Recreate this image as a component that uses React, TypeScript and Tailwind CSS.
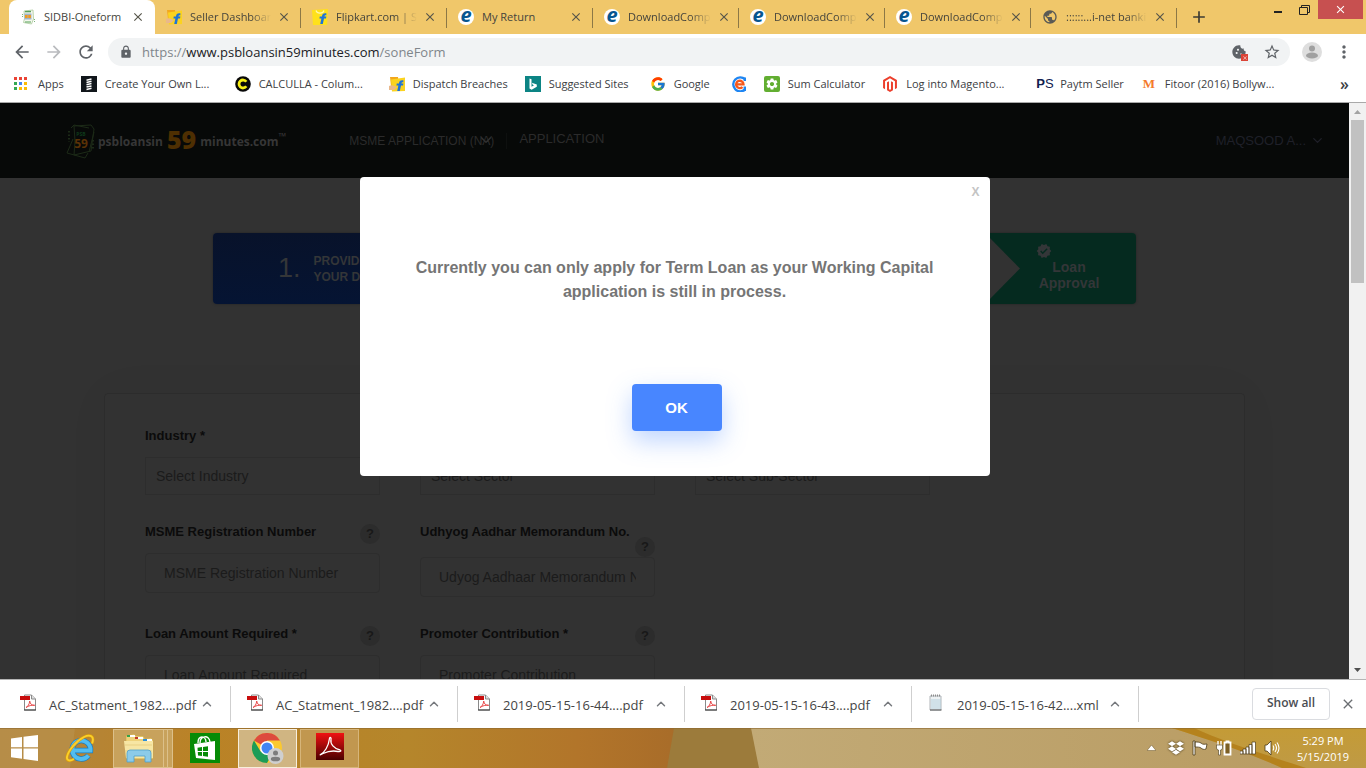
import React from "react";
import {
  MdAdd, MdArrowBack, MdArrowForward, MdClose, MdCookie, MdLock, MdMoreVert,
  MdPublic, MdRefresh, MdSettings, MdStarBorder, MdVerified,
} from "react-icons/md";
import { FcGoogle } from "react-icons/fc";
import { FaDropbox, FaMagento } from "react-icons/fa";
import { ChevronDown, ChevronUp } from "lucide-react";

const uiFont = "font-['Open_Sans','Noto_Sans',sans-serif]";
const pageFont = "font-['Liberation_Sans',Arial,sans-serif]";

/* ---------- small site icons ---------- */

function SidbiIcon() {
  return (
    <svg viewBox="0 0 16 16" className="size-4 shrink-0" aria-hidden="true">
      <path d="M4 2l9-1 .5 9-2 5-8-1.500 1-4z" fill="#f4f7ee" stroke="#a9c99b" strokeWidth="0.800" />
      <path d="M5 2.600h6" stroke="#58a05a" strokeWidth="1.400" />
      <rect x="4.500" y="4.500" width="7" height="6" fill="#9fb4c9" />
      <path d="M5 7.500h6" stroke="#f29a1f" strokeWidth="3" strokeDasharray="2.600 0.700" />
      <path d="M5 13h6" stroke="#6fb070" strokeWidth="1.200" />
      <path d="M2.500 5v4M14.500 10v3" stroke="#7cb37a" strokeDasharray="1 1" />
    </svg>
  );
}

function FlipkartIcon({ bag = false }: { bag?: boolean }) {
  return (
    <svg viewBox="0 0 16 16" className="size-4 shrink-0" aria-hidden="true">
      {bag ? (
        <>
          <path d="M0 1l16-1-1 16H1z" fill="#ffe11b" />
          <path d="M4 1.500c1 3.500 7 3.500 8 0" fill="none" stroke="#fff8b0" strokeWidth="1.200" />
        </>
      ) : (
        <>
          <path d="M1 1h8l1 9H2z" fill="#f3a71c" />
          <path d="M2 3.500l14-2v13.500l-13 .5z" fill="#fbd31f" />
          <path d="M0 10c3-2 5 0 8 1l-3 3H0z" fill="#e9b88b" />
        </>
      )}
      <path d="M14.500 4.500c-3-.6-4.200.8-4.600 3H7.800l-.4 1.900h2L8.200 15h2.600l1.200-5.600h2l.4-1.900h-2c.2-1 .8-1.300 1.800-1.100z" fill="#1f74d8" />
    </svg>
  );
}

function EIcon() {
  return (
    <span className="flex size-4 shrink-0 items-center justify-center rounded-full bg-white">
      <span className="-mt-1 font-['Open_Sans',sans-serif] text-[20px] leading-none font-bold text-[#075690] italic">e</span>
    </span>
  );
}

function SpringIcon() {
  return (
    <svg viewBox="0 0 16 16" className="size-4 shrink-0" aria-hidden="true">
      <rect width="16" height="16" fill="#11161b" />
      <path d="M5.500 4.200l5-1.200M5.500 6.500l5-1.200M5.500 8.800l5-1.200M5.500 11.100l5-1.200M5.500 13.400l5-1.200" stroke="#fff" strokeWidth="1.500" />
    </svg>
  );
}

function CalcullaIcon() {
  return (
    <svg viewBox="0 0 16 16" className="size-4 shrink-0" aria-hidden="true">
      <circle cx="8" cy="8" r="7.800" fill="#080808" />
      <path d="M11.300 5.700a4 4 0 1 0 0 4.600" fill="none" stroke="#f6ee15" strokeWidth="2.800" />
    </svg>
  );
}

function BingIcon() {
  return (
    <svg viewBox="0 0 16 16" className="size-4 shrink-0" aria-hidden="true">
      <rect width="16" height="16" fill="#0c8484" />
      <path d="M4.500 2.500l2 .7v7.600l2.500-1.500-1.300-.6-.8-2 4.900 1.700v2.300l-5.200 3.100-2.100-1.200z" fill="#fff" />
    </svg>
  );
}

function RingEIcon() {
  return (
    <svg viewBox="0 0 16 16" className="size-4 shrink-0" aria-hidden="true">
      <path d="M14 3.200A7 7 0 1 0 14 13.500" fill="none" stroke="#1f86f2" strokeWidth="2.400" />
      <path d="M13.800 1.500v3.500M13.800 10.500v4.500" stroke="#1f86f2" strokeWidth="2.400" />
      <path d="M5 8.300h7.500A3.700 3.700 0 1 0 11.500 11" fill="none" stroke="#f5581c" strokeWidth="2.300" />
    </svg>
  );
}

function GearTile() {
  return (
    <span className="flex size-4 shrink-0 items-center justify-center rounded-[2px] bg-[#62ae31] text-white">
      <MdSettings size={14} />
    </span>
  );
}

function PaytmIcon() {
  return (
    <span className="flex w-4 shrink-0 font-['Liberation_Sans',sans-serif] text-[13px] leading-4 text-[#10204f]">
      <b>P</b><span>S</span>
    </span>
  );
}

function MIcon() {
  return (
    <span className="w-4 shrink-0 text-center font-['Liberation_Serif',serif] text-[13px] leading-4 font-bold text-[#f47b2a]">M</span>
  );
}

function AppsIcon() {
  const dots = ["#ea4335", "#ea4335", "#ea4335", "#34a853", "#4285f4", "#fbbc05", "#34a853", "#fbbc05", "#fbbc05"];
  return (
    <svg viewBox="0 0 14 14" className="mr-0.5 size-3.5 shrink-0" aria-hidden="true">
      {dots.map((c, i) => (
        <rect key={i} x={(i % 3) * 5} y={Math.floor(i / 3) * 5} width="3" height="3" fill={c} />
      ))}
    </svg>
  );
}

/* ---------- browser frame ---------- */

const tabs = [
  { title: "SIDBI-Oneform", icon: <SidbiIcon /> },
  { title: "Seller Dashboar", icon: <FlipkartIcon />, fade: true },
  { title: "Flipkart.com | S", icon: <FlipkartIcon bag />, fade: true },
  { title: "My Return", icon: <EIcon /> },
  { title: "DownloadComp", icon: <EIcon />, fade: true },
  { title: "DownloadComp", icon: <EIcon />, fade: true },
  { title: "DownloadComp", icon: <EIcon />, fade: true },
  { title: "::::::...i-net banki", icon: <MdPublic size={16} className="shrink-0 text-[#5a5a55]" />, fade: true },
];

function TabStrip() {
  return (
    <div className="flex h-[34px] shrink-0 items-stretch bg-[#f0c76a] pl-[9px]">
      <div role="tablist" className="flex">
        {tabs.map((t, i) => (
          <div
            key={i}
            className={
              i === 0
                ? "relative flex w-[146px] items-center rounded-t-lg bg-white pr-[10px] pl-[11px]"
                : "relative flex w-[146px] items-center pr-[10px] pl-[11px]"
            }
          >
            {t.icon}
            <button
              role="tab"
              aria-selected={i === 0}
              className={
                t.fade
                  ? "ml-2 flex-1 text-left text-[11px] whitespace-nowrap text-[#45443c] [mask-image:linear-gradient(to_right,black_75%,transparent)]"
                  : "ml-2 flex-1 text-left text-[11px] whitespace-nowrap text-[#45443c]"
              }
            >
              {t.title}
            </button>
            <button aria-label="Close tab" className="ml-1.5 shrink-0 text-[#56554a]">
              <MdClose size={14} />
            </button>
            {i > 0 && <span className="absolute top-2 right-0 h-5 w-px bg-[#8c7846]" />}
          </div>
        ))}
      </div>
      <button aria-label="New tab" className="ml-3 text-[#3c3b33]">
        <MdAdd size={20} />
      </button>
      <div className="ml-auto flex items-start pr-[3px] text-[#222]">
        <button aria-label="Minimize" className="flex h-5 w-6 items-end justify-center pb-[7px]">
          <span className="h-0.5 w-2 bg-[#222]" />
        </button>
        <button aria-label="Restore" className="flex h-5 w-7 items-center justify-center">
          <svg width="11" height="10" viewBox="0 0 11 10">
            <path d="M.5 2.500h8v7h-8zM2.500 2.500v-2h8v7h-2" fill="none" stroke="#222" />
          </svg>
        </button>
        <button aria-label="Close" className="flex h-[19px] w-[45px] items-center justify-center bg-[#c75050] text-white">
          <MdClose size={13} />
        </button>
      </div>
    </div>
  );
}

function Toolbar() {
  return (
    <div className="flex h-9 shrink-0 items-center bg-white pr-3 pl-3 text-[#5f6368]">
      <button aria-label="Back"><MdArrowBack size={20} /></button>
      <button aria-label="Forward" className="ml-3 text-[#b9bbbe]"><MdArrowForward size={20} /></button>
      <button aria-label="Reload" className="ml-3"><MdRefresh size={20} /></button>
      <div className="ml-3 flex h-7 flex-1 items-center rounded-full bg-[#f1f3f4] pr-[9px] pl-[11px]">
        <MdLock size={14} />
        <a href="#page" className="ml-[9px] flex-1 pt-0.5 text-[13px] text-[#80868b]">
          https://<span className="text-[#202124]">www.psbloansin59minutes.com</span>/soneForm
        </a>
        <button aria-label="Cookies blocked" className="relative mr-4">
          <MdCookie size={16} />
          <span className="absolute -right-px -bottom-px flex size-[7px] items-center justify-center bg-[#db4437] text-white">
            <MdClose size={6} />
          </span>
        </button>
        <button aria-label="Bookmark this page"><MdStarBorder size={18} /></button>
      </div>
      <button aria-label="Profile" className="ml-3">
        <svg viewBox="0 0 20 20" className="size-5">
          <circle cx="10" cy="10" r="10" fill="#dedede" />
          <circle cx="10" cy="6.500" r="3" fill="#a0a0a0" />
          <ellipse cx="10" cy="13.500" rx="6" ry="3" fill="#a0a0a0" />
        </svg>
      </button>
      <button aria-label="Menu" className="ml-3"><MdMoreVert size={20} /></button>
    </div>
  );
}

const bookmarks = [
  { label: "Apps", icon: <AppsIcon /> },
  { label: "Create Your Own L...", icon: <SpringIcon />, width: "w-[113px]" },
  { label: "CALCULLA - Colum...", icon: <CalcullaIcon />, width: "w-[113px]" },
  { label: "Dispatch Breaches", icon: <FlipkartIcon /> },
  { label: "Suggested Sites", icon: <BingIcon />, width: "w-[84px]" },
  { label: "Google", icon: <FcGoogle size={16} className="shrink-0" />, width: "w-10" },
  { label: "", icon: <RingEIcon /> },
  { label: "Sum Calculator", icon: <GearTile /> },
  { label: "Log into Magento...", icon: <FaMagento size={16} className="shrink-0 text-[#ec3f2c]" />, width: "w-[113px]" },
  { label: "Paytm Seller", icon: <PaytmIcon /> },
  { label: "Fitoor (2016) Bollyw...", icon: <MIcon />, width: "w-[113px]" },
];

function BookmarksBar() {
  return (
    <nav className="flex h-[33px] shrink-0 items-center gap-[17px] border-b border-[#a9a9a9] bg-white pr-[17px] pb-1 pl-[14px] text-[11px] text-[#3c4043]">
      {bookmarks.map((b, i) => (
        <a key={i} href="#page" aria-label={b.label || "Bookmark"} className="flex items-center gap-2 whitespace-nowrap">
          {b.icon}
          {b.label && <span className={b.width}>{b.label}</span>}
        </a>
      ))}
      <button aria-label="More bookmarks" className="ml-auto text-[16px] leading-5 font-semibold">»</button>
    </nav>
  );
}

/* ---------- web page ---------- */

function SiteHeader() {
  return (
    <header className="flex h-[75px] items-center bg-[#070908] pr-6 pl-[66px] text-[13px] text-[#2b2b2b]">
      <a href="#page" className="flex items-center font-['Open_Sans',sans-serif] text-[12px] font-bold text-[#363636]">
        <svg viewBox="0 0 30 36" className="mr-0.5 h-9 w-[30px]" aria-hidden="true">
          <g fill="none" stroke="#1c2a17">
            <path d="M8 3l17-1 3 4-3 22-17 4 1-14z" />
            <path d="M5 5l3-3 15 3M1 30l6-14M1 30l18 5 3-5M28 9l-5 20" />
            <path d="M3 8v11M27 17v9" strokeDasharray="1.500 2" strokeWidth="2" />
          </g>
          <text x="15" y="13" fontSize="5" textAnchor="middle" fill="#0e3a1b" fontWeight="700">PSB</text>
          <text x="15" y="25" fontSize="12" textAnchor="middle" fill="#5a3206" fontWeight="700">59</text>
        </svg>
        <span className="pt-0.5">psbloansin</span>
        <span className="mx-1 mb-1 text-[25px] leading-8 font-extrabold text-[#4e2f02]">59</span>
        <span className="pt-0.5">minutes.com</span>
        <span className="mb-2 text-[10px]">™</span>
      </a>
      <nav className="ml-[63px] flex items-center">
        <a href="#page" className="relative pt-px text-[12px] whitespace-nowrap">
          MSME APPLICATION (NA)
          <ChevronDown size={18} className="absolute top-0 -right-px text-[#303030]" />
        </a>
        <span className="mx-3 h-4 w-px bg-[#0e100f]" />
        <a href="#page" className="pb-[3px]">APPLICATION</a>
      </nav>
      <button className="ml-auto flex items-center gap-1 whitespace-nowrap text-[#1f2029]">
        MAQSOOD A...
        <ChevronDown size={15} />
      </button>
    </header>
  );
}

function Steps() {
  return (
    <ol className="mx-auto mt-[55px] flex h-[71px] w-[923px] max-w-full overflow-hidden rounded text-[#343638] shadow-[0_0_3px_rgba(0,0,0,0.3)]">
      <li className="flex flex-1 items-center bg-linear-to-b from-[#08122a] to-[#051433] pl-[65px]">
        <span className="text-[27px]">1.</span>
        <span className="ml-[13px] text-[12px] leading-4 font-bold">PROVIDE<br />YOUR DATA</span>
      </li>
      <li className="flex flex-1 items-center bg-[#052a1f]" />
      <li className="flex flex-1 bg-[#052a1f]">
        <svg viewBox="0 0 35 71" className="ml-[135px] h-full w-[35px] shrink-0" aria-hidden="true">
          <path d="M0 0l35 35.500L0 71z" fill="#323232" />
        </svg>
        <div className="ml-4 w-[66px] pt-[10px] text-center text-[14px] leading-4 font-bold">
          <MdVerified size={16} />
          Loan<br />Approval
        </div>
      </li>
    </ol>
  );
}

const fieldClass = "block w-full border border-[#2d2d2d] bg-transparent text-[14px] text-[#1b1b1b] outline-none placeholder:text-[#1b1b1b] placeholder:opacity-100";

function SelectField({ id, label, option }: { id: string; label: string; option: string }) {
  return (
    <div>
      <label htmlFor={id} className="block h-8 text-[13px] leading-[22px] font-bold text-[#0b0b0b]">{label}</label>
      <select id={id} className={`${fieldClass} h-[38px] appearance-none px-[10px]`}>
        <option>{option}</option>
      </select>
    </div>
  );
}

function TextField({ id, label, placeholder, below = false }: { id: string; label: string; placeholder: string; below?: boolean }) {
  return (
    <div>
      <div className={below ? "flex h-9 flex-col" : "flex h-8 justify-between"}>
        <label htmlFor={id} className="h-5 text-[13px] leading-[22px] font-bold whitespace-nowrap text-[#0b0b0b]">{label}</label>
        <button
          aria-label="Help"
          className={
            below
              ? "-mt-1 size-5 self-end rounded-full bg-[#2c2c2c] text-[13px] leading-5 font-bold text-[#181818]"
              : "mt-[3px] size-5 rounded-full bg-[#2c2c2c] text-[13px] leading-5 font-bold text-[#181818]"
          }
        >
          ?
        </button>
      </div>
      <input id={id} placeholder={placeholder} className={`${fieldClass} h-10 rounded px-[18px]`} />
    </div>
  );
}

function LoanForm() {
  return (
    <form className="mx-auto mt-[89px] grid w-[1141px] max-w-full grid-cols-[repeat(3,235px)] gap-x-10 gap-y-[26px] rounded border border-[#2c2c2c] px-10 pt-[31px] pb-20 shadow-[0_0_50px_rgba(0,0,0,0.03)]">
      <SelectField id="industry" label="Industry *" option="Select Industry" />
      <SelectField id="sector" label="Sector *" option="Select Sector" />
      <SelectField id="subsector" label="Sub-Sector *" option="Select Sub-Sector" />
      <TextField id="msme" label="MSME Registration Number" placeholder="MSME Registration Number" />
      <TextField id="udyog" label="Udhyog Aadhar Memorandum No." placeholder="Udyog Aadhaar Memorandum Number" below />
      <span />
      <TextField id="amount" label="Loan Amount Required *" placeholder="Loan Amount Required" />
      <TextField id="promoter" label="Promoter Contribution *" placeholder="Promoter Contribution" />
    </form>
  );
}

function NoticeDialog() {
  return (
    <div
      role="dialog"
      aria-modal="true"
      aria-label="Notice"
      className="absolute top-[74px] left-1/2 flex w-[630px] max-w-full -translate-x-1/2 flex-col items-center rounded bg-white px-10 pt-[79px] pb-[45px]"
    >
      <button aria-label="Close dialog" className="absolute top-[7px] right-[10px] text-[12px] leading-4 font-bold text-[#c4c4c4]">X</button>
      <p className="text-center text-[16px] leading-6 font-bold text-[#757575]">
        Currently you can only apply for Term Loan as your Working Capital application is still in process.
      </p>
      <button className="mt-20 ml-1 h-[47px] w-[90px] rounded bg-[#4886ff] pt-px text-[15px] font-bold text-white shadow-[0_10px_25px_rgba(72,134,255,0.35)]">
        OK
      </button>
    </div>
  );
}

function Scrollbar() {
  return (
    <div className="flex w-[17px] shrink-0 flex-col items-center bg-[#f1f1f1]" aria-hidden="true">
      <svg viewBox="0 0 17 17" className="size-[17px]"><path d="M5 11l3.500-4 3.500 4z" fill="#a3a3a3" /></svg>
      <div className="h-[163px] w-[13px] bg-[#c1c1c1]" />
      <svg viewBox="0 0 17 17" className="mt-auto size-[17px]"><path d="M5 6l3.500 4L12 6z" fill="#505050" /></svg>
    </div>
  );
}

/* ---------- downloads and taskbar ---------- */

function PdfIcon() {
  return (
    <svg viewBox="0 0 17 17" className="mb-1 size-[17px]" aria-hidden="true">
      <path d="M4.500 1h7l4 4v11h-11z" fill="#fff" stroke="#8a8a8a" />
      <path d="M11.500 1v4h4" fill="#ddd" stroke="#8a8a8a" />
      <path d="M4 16h12" stroke="#333" />
      <rect y="2" width="10" height="4" fill="#c80d0d" />
      <path d="M6 13.500c2-1 3.500-3.500 3.700-6.500.5 3 2 4.500 5 4.300-3-.4-6 .4-8.700 2.200z" fill="none" stroke="#e8494a" />
    </svg>
  );
}

function XmlIcon() {
  return (
    <svg viewBox="0 0 17 17" className="mb-1 size-[17px]" aria-hidden="true">
      <path d="M2 2h11v14H2z" fill="#eef2f4" stroke="#b0b5b9" />
      <path d="M3 6h10M3 8h10M3 10h10M3 12h10M3 14h10" stroke="#b4d0dc" />
      <path d="M3 1.500h9" stroke="#8c8c8c" strokeDasharray="1 1" strokeWidth="2" />
      <path d="M2 16h11.500" stroke="#555" />
    </svg>
  );
}

const downloads = [
  "AC_Statment_1982....pdf",
  "AC_Statment_1982....pdf",
  "2019-05-15-16-44....pdf",
  "2019-05-15-16-43....pdf",
  "2019-05-15-16-42....xml",
];

function DownloadShelf() {
  return (
    <section aria-label="Downloads" className="flex h-[49px] shrink-0 items-center border-t border-[#b5b5b5] bg-white pr-2.5 pl-1">
      {downloads.map((name, i) => (
        <div key={i} className="flex h-9 w-[227px] items-center border-r border-[#cfcfcf] pr-4 pl-4">
          {name.endsWith("xml") ? <XmlIcon /> : <PdfIcon />}
          <a href="#page" className="ml-3 pt-1 text-[13px] whitespace-nowrap text-[#454545]">{name}</a>
          <button aria-label="Download options" className="ml-auto text-[#76797d]"><ChevronUp size={14} strokeWidth={2.5} /></button>
        </div>
      ))}
      <button className="ml-auto h-8 w-[78px] rounded border border-[#dadce0] pb-0.5 text-[12px] font-semibold text-[#4a4d52]">Show all</button>
      <button aria-label="Close downloads" className="ml-2.5 text-[#6b6e72]"><MdClose size={16} /></button>
    </section>
  );
}

function TaskbarBackground() {
  return (
    <svg viewBox="0 0 1366 40" preserveAspectRatio="none" className="absolute inset-0 size-full" aria-hidden="true">
      <defs>
        <linearGradient id="wood">
          <stop offset="0" stopColor="#b28640" />
          <stop offset="0.3" stopColor="#ba8226" />
          <stop offset="0.6" stopColor="#b5862b" />
          <stop offset="0.85" stopColor="#b2752a" />
          <stop offset="1" stopColor="#a86c29" />
        </linearGradient>
        <linearGradient id="sand">
          <stop offset="0" stopColor="#c2aa76" />
          <stop offset="1" stopColor="#b99c63" />
        </linearGradient>
        <linearGradient id="amber" x2="0" y2="1">
          <stop offset="0" stopColor="#c49b36" />
          <stop offset="1" stopColor="#bf9a45" />
        </linearGradient>
      </defs>
      <rect width="680" height="40" fill="url(#wood)" />
      <path d="M0 0h75l-5 40H0z" fill="#b9934f" opacity="0.6" />
      <path d="M674 0h80l8 40h-95z" fill="#9c7b3b" />
      <path d="M751 0h430l110 40H759z" fill="url(#sand)" />
      <path d="M1172 0h194v40h-84c-40-18-70-27-110-40z" fill="url(#amber)" />
      <path d="M1172 0h22c30 14 70 26 112 40h-24c-40-18-70-27-110-40z" fill="#b5821d" />
      <path d="M0 .5h1366" stroke="#8e6930" strokeOpacity="0.6" />
    </svg>
  );
}

function WindowsIcon() {
  return (
    <svg viewBox="0 0 27 26" className="h-[26px] w-[27px]" aria-hidden="true">
      <path d="M0 3.500l11-1.600v10.300H0zM12.500 1.700L27 0v12.200H12.500zM0 13.600h11v10.200L0 22.300zM12.500 13.600H27V26l-14.500-2z" fill="#fff" />
    </svg>
  );
}

function ExplorerEIcon() {
  return (
    <svg viewBox="0 0 30 30" className="size-[30px]" aria-hidden="true">
      <path d="M8 17.500h17.500A9.200 9.200 0 1 0 23.500 22.500" fill="none" stroke="#1d7dbe" strokeWidth="5.400" />
      <path d="M8 17.500h17.500A9.200 9.200 0 1 0 23.500 22.500" fill="none" stroke="#52bdf0" strokeWidth="4" />
      <path d="M27 10.500C30 3 25 1 19 4 11 8 3 18 2 24c-.6 4 3 4.500 7 2" fill="none" stroke="#d99b0d" strokeWidth="3" />
      <path d="M27 10.500C30 3 25 1 19 4 11 8 3 18 2 24c-.6 4 3 4.500 7 2" fill="none" stroke="#fbd02a" strokeWidth="1.900" />
    </svg>
  );
}

function FolderIcon() {
  return (
    <svg viewBox="0 0 32 30" className="h-[30px] w-8" aria-hidden="true">
      <path d="M3 3l8-2 2 2h7l2 3 6-1 2 2v19H3z" fill="#efd27a" stroke="#c9a746" strokeWidth="0.600" />
      <path d="M4 2h8v2H4zM12 4h8v2h-8zM20 6h9v2h-9z" fill="#fff" />
      <rect x="4" y="2" width="3" height="2" fill="#35a24b" />
      <rect x="12" y="4" width="3" height="2" fill="#c23b2a" />
      <rect x="20" y="6" width="4" height="2" fill="#2c8fd8" />
      <path d="M1 8h29v17H3z" fill="#f7e6a4" />
      <path d="M2 12h27M2 18h27" stroke="#e9d083" />
      <path d="M4 29V20q0-3 3-3h18q3 0 3 3v9h-6v-6H11v6z" fill="#8ccbe9" stroke="#4f9fc9" strokeWidth="0.800" />
    </svg>
  );
}

function StoreIcon() {
  return (
    <svg viewBox="0 0 30 30" className="size-[30px]" aria-hidden="true">
      <rect width="30" height="30" fill="#068b06" />
      <path d="M10 10c0-7 9-9 10-1M8 10c0-3 1-6 4-6 2 0 4 2 4 5" fill="none" stroke="#fff" strokeWidth="1.400" />
      <path d="M4 11l21-3v19L6 25z" fill="#fff" />
      <path d="M7.500 14.700l4.500-.6v3.900H7.700zM13 14l5-.7v4.700h-5zM7.800 19h4.200v3.900l-4-.5zM13 19h5v4.700l-5-.6z" fill="#068b06" />
    </svg>
  );
}

function ChromeIcon() {
  return (
    <svg viewBox="0 0 32 31" className="h-[31px] w-8" aria-hidden="true">
      <circle cx="15" cy="15" r="15" fill="#fbc92f" />
      <path d="M15 15L2 7.500A15 15 0 0 1 28 7.500H15z" fill="#dd4b3e" />
      <path d="M15 15l6.500 3.700L15 30A15 15 0 0 1 2 7.500l6.600 11z" fill="#1c9c57" />
      <circle cx="15" cy="15" r="7" fill="#fff" />
      <circle cx="15" cy="15" r="5.500" fill="#4285f4" />
      <circle cx="23.500" cy="23" r="8" fill="#cfcfcf" />
      <circle cx="23.500" cy="20" r="2.500" fill="#7d7d7d" />
      <ellipse cx="23.500" cy="26" rx="4.700" ry="2.300" fill="#7d7d7d" />
    </svg>
  );
}

function AcrobatIcon() {
  return (
    <svg viewBox="0 0 28 27" className="mb-1 h-[27px] w-7" aria-hidden="true">
      <defs>
        <linearGradient id="acro" x2="0" y2="1">
          <stop offset="0" stopColor="#f01212" />
          <stop offset="1" stopColor="#4a0000" />
        </linearGradient>
      </defs>
      <rect width="28" height="27" fill="url(#acro)" />
      <path d="M4.500 21.500c4-2 8-8 9-16 .4-2 2-1 1.500 1-1 4.500 3 9 9 10.500 2 1 0 2-2 1.500-6-1.300-10-.3-15 2-2 1.200-3.500 1.700-2.500 1z" fill="none" stroke="#fff" strokeWidth="1.300" />
    </svg>
  );
}

function Tray() {
  return (
    <div className="ml-auto flex items-center gap-2 text-white">
      <svg viewBox="0 0 9 6" className="mr-1 h-1.5 w-[9px]" aria-hidden="true"><path d="M0 5.500L4.500 0 9 5.500z" fill="#fff" stroke="#6b5426" strokeWidth="0.500" /></svg>
      <FaDropbox size={16} className="drop-shadow-[0_0_1px_#3d2f10]" />
      <svg viewBox="0 0 16 16" className="size-4" aria-hidden="true">
        <path d="M1 1h2v14H1zM3 2c3 0 4 0 6 1 2 2 4 1 6 1l-1 5c-2 1-4 0-5-1s-4-1-6-1z" fill="#fff" stroke="#4a3a18" strokeWidth="0.800" />
      </svg>
      <svg viewBox="0 0 16 16" className="size-4" aria-hidden="true">
        <path d="M2 1v4M5 1v4" stroke="#fff" strokeWidth="1.400" />
        <path d="M0.500 5h6v3q0 2-2 2v5h-2v-5q-2 0-2-2z" fill="#fff" stroke="#4a3a18" strokeWidth="0.600" />
        <path d="M8.500 2.500h2v-1h2v1h2v12h-6z" fill="#7d5f24" stroke="#fff" strokeWidth="1.800" />
      </svg>
      <svg viewBox="0 0 16 16" className="size-4" aria-hidden="true">
        <path d="M0 11h3v3H0zM3 9h3v5H3zM6 7h3v7H6zM9 4.500h3V14H9zM12 2h3.500v12H12z" fill="#fff" stroke="#4a3a18" strokeWidth="0.700" />
      </svg>
      <svg viewBox="0 0 16 16" className="size-4" aria-hidden="true">
        <path d="M1 5h2l4-4v14l-4-4H1z" fill="#fff" stroke="#4a3a18" strokeWidth="0.800" />
        <path d="M9 5.500q1.500 2.500 0 5M11 4q3 4 0 8M13 2.500q4 5.500 0 11" fill="none" stroke="#fff" strokeWidth="1.100" />
      </svg>
      <time className="w-[70px] pt-0.5 text-center text-[11px] leading-4">5:29 PM<br />5/15/2019</time>
    </div>
  );
}

function Taskbar() {
  return (
    <footer className="relative h-10 shrink-0">
      <TaskbarBackground />
      <div className="relative flex h-full items-center pr-2 pl-[11px]">
        <button aria-label="Start"><WindowsIcon /></button>
        <button aria-label="Internet Explorer" className="ml-[27px]"><ExplorerEIcon /></button>
        <button aria-label="File Explorer" className="ml-[18px] flex h-[39px] border border-[#dcc08a] bg-[#c8a25c]">
          <span className="flex h-full w-[50px] items-center justify-center border-r border-[#dcc08a]"><FolderIcon /></span>
          <span className="h-full w-1 border-r border-[#dcc08a]" />
          <span className="h-full w-1" />
        </button>
        <button aria-label="Store" className="ml-[17px]"><StoreIcon /></button>
        <button aria-label="Chrome" className="ml-[18px] flex h-[39px] w-[59px] items-center justify-center border border-[#f7eedd] bg-[#d0b582]"><ChromeIcon /></button>
        <button aria-label="Acrobat" className="ml-[3px] flex h-[39px] w-[59px] items-center justify-center border border-[#d6b57a] bg-[#c1974f]"><AcrobatIcon /></button>
        <Tray />
      </div>
    </footer>
  );
}

export default function App() {
  return (
    <div className={`flex h-screen flex-col overflow-hidden ${uiFont}`}>
      <TabStrip />
      <Toolbar />
      <BookmarksBar />
      <div id="page" className="flex min-h-0 flex-1">
        <main className={`relative min-w-0 flex-1 overflow-hidden bg-[#323232] ${pageFont}`}>
          <SiteHeader />
          <Steps />
          <LoanForm />
          <NoticeDialog />
        </main>
        <Scrollbar />
      </div>
      <DownloadShelf />
      <Taskbar />
    </div>
  );
}
